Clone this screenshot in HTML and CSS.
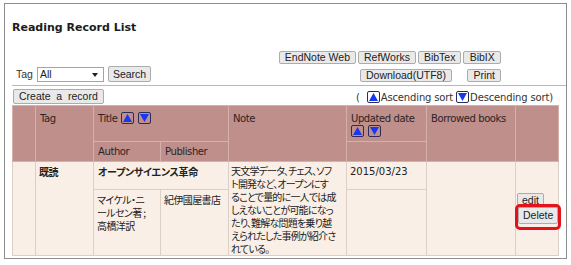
FILE: index.html
```html
<!DOCTYPE html>
<html lang="ja">
<head>
  <meta charset="UTF-8">
  <title>Reading Record List</title>
  <link rel="stylesheet" href="styles.css">
</head>
<body>
  <div class="frame">
    <h1>Reading Record List</h1>

    <div class="toolbar">
      <form class="search">
        <span>Tag</span>
        <span class="select"><select><option>All</option></select></span>
        <button type="button" class="btn btn-search">Search</button>
      </form>
      <div class="export">
        <button class="btn">EndNote Web</button>
        <button class="btn">RefWorks</button>
        <button class="btn">BibTex</button>
        <button class="btn">BibIX</button>
        <button class="btn btn-download">Download(UTF8)</button>
        <button class="btn btn-print">Print</button>
      </div>
    </div>

    <div class="actions">
      <button class="btn btn-create">Create&nbsp; a&nbsp; record</button>
      <span class="legend">(<svg class="sort first" viewBox="0 0 13 12"><rect x="0.5" y="0.5" width="12" height="11" rx="1.5"/><polygon points="2,10 11,10 6.5,2"/></svg>Ascending sort <svg class="sort" viewBox="0 0 13 12"><rect x="0.5" y="0.5" width="12" height="11" rx="1.5"/><polygon points="2,2 11,2 6.5,10"/></svg>Descending sort)</span>
    </div>

    <table class="records">
      <colgroup>
        <col style="width:23px">
        <col style="width:58px">
        <col style="width:67px">
        <col style="width:68px">
        <col style="width:118px">
        <col style="width:80px">
        <col style="width:89px">
        <col style="width:43px">
      </colgroup>
      <thead>
        <tr class="head1">
          <th rowspan="2"></th>
          <th rowspan="2">Tag</th>
          <th colspan="2">Title<svg class="sort" viewBox="0 0 13 12"><rect x="0.5" y="0.5" width="12" height="11" rx="1.5"/><polygon points="2,10 11,10 6.5,2"/></svg><svg class="sort" viewBox="0 0 13 12"><rect x="0.5" y="0.5" width="12" height="11" rx="1.5"/><polygon points="2,2 11,2 6.5,10"/></svg></th>
          <th rowspan="2">Note</th>
          <th class="updated">Updated date<br><svg class="sort" viewBox="0 0 13 12"><rect x="0.5" y="0.5" width="12" height="11" rx="1.5"/><polygon points="2,10 11,10 6.5,2"/></svg><svg class="sort" viewBox="0 0 13 12"><rect x="0.5" y="0.5" width="12" height="11" rx="1.5"/><polygon points="2,2 11,2 6.5,10"/></svg></th>
          <th rowspan="2">Borrowed books</th>
          <th rowspan="2"></th>
        </tr>
        <tr class="head2">
          <th>Author</th>
          <th>Publisher</th>
          <th></th>
        </tr>
      </thead>
      <tbody>
        <tr class="row1">
          <td rowspan="2"></td>
          <td rowspan="2" class="tag">既読</td>
          <td colspan="2" class="title">オープンサイエンス革命</td>
          <td rowspan="2" class="note">天文学データ、チェス、ソフ<br>ト開発など、オープンにす<br>ることで量的に一人では成<br>しえないことが可能になっ<br>たり、難解な問題を乗り越<br>えられたした事例が紹介さ<br>れている。</td>
          <td class="date">2015/03/23</td>
          <td rowspan="2"></td>
          <td rowspan="2" class="ops">
            <button class="btn btn-edit">edit</button>
            <span class="mark"><button class="btn btn-delete">Delete</button></span>
          </td>
        </tr>
        <tr class="row2">
          <td>マイケル・ニ<br>ールセン著 ;<br>高橋洋訳</td>
          <td>紀伊國屋書店</td>
          <td></td>
        </tr>
      </tbody>
    </table>
  </div>
</body>
</html>
```

FILE: styles.css
```css
:root {
  --head: #be8f8b;
  --head-line: #d5b1ad;
  --body: #f9efe6;
  --body-line: #dad0c8;
  --btn-bg: #e9e9e9;
  --btn-line: #acacac;
}
* { box-sizing: border-box; }
body {
  margin: 0;
  background: #fff;
  font-family: "DejaVu Sans", Verdana, sans-serif;
  color: #222;
}
.frame {
  margin: 3px 0 0 4px;
  width: 563px;
  height: 256px;
  border: 1px solid #8c8c8c;
  overflow: hidden;
}
h1 {
  margin: 17px 0 0 7px;
  font-size: 11px;
  line-height: 14px;
  font-weight: bold;
  color: #1c1c1c;
}
.toolbar {
  display: flex;
  justify-content: space-between;
  align-items: flex-end;
  margin: 16px 0 0 7px;
  padding: 0 65px 3px 4px;
  border-bottom: 1px solid #b8b8b8;
}
.search {
  display: flex;
  align-items: center;
  gap: 4px;
  margin: 0;
  font-family: "Liberation Sans", Arial, sans-serif;
  font-size: 10.5px;
  color: #333;
}
.select { position: relative; display: inline-block; }
.select select {
  appearance: none;
  -webkit-appearance: none;
  width: 67px;
  height: 15px;
  padding: 0 0 0 2px;
  border: 1px solid #a4a4a4;
  border-radius: 0;
  background: #fff;
  font-family: "Liberation Sans", Arial, sans-serif;
  font-size: 10.5px;
  line-height: 13px;
  color: #222;
}
.select::after {
  content: "";
  position: absolute;
  right: 6px;
  top: 6px;
  border-left: 3px solid transparent;
  border-right: 3px solid transparent;
  border-top: 4px solid #222;
}
.btn {
  font-family: "Liberation Sans", Arial, sans-serif;
  font-size: 10.5px;
  line-height: 11px;
  height: 13px;
  padding: 0 4px;
  color: #222;
  background: var(--btn-bg);
  border: 1px solid var(--btn-line);
  border-radius: 2px;
  white-space: nowrap;
}
.btn-search { height: 16px; }
.export {
  display: grid;
  grid-template-columns: repeat(4, auto);
  column-gap: 2px;
  row-gap: 5px;
}
.export .btn { padding: 0 5px; }
.btn-download { grid-column: 2 / 4; justify-self: start; margin-left: 2px; }
.btn-print { grid-column: 4; justify-self: start; margin-left: 4px; }

.actions {
  display: flex;
  justify-content: space-between;
  align-items: center;
  width: 546px;
  margin: 3px 0 1px 7px;
}
.btn-create { height: 15px; padding: 0 5px; margin-left: 1px; }
.legend {
  margin-right: 5px;
  font-size: 10px;
  letter-spacing: -0.15px;
  color: #333;
  white-space: nowrap;
}
.sort {
  width: 13px;
  height: 12px;
  vertical-align: -2px;
}
.sort rect { fill: none; stroke: #2c2c5c; stroke-width: 1; }
.sort polygon { fill: #1737f2; }
.legend .sort { margin-right: 1px; }
.legend .sort rect { fill: #fff; }
.legend .sort.first { margin-left: 7px; }

.records {
  margin-left: 7px;
  width: 546px;
  table-layout: fixed;
  border-collapse: collapse;
  border-bottom: 1px solid #a9a9a9;
}
.records th {
  background: var(--head);
  border: 1px solid var(--head-line);
  padding: 6px 4px 3px;
  font-size: 10px;
  letter-spacing: -0.4px;
  line-height: 13px;
  font-weight: normal;
  text-align: left;
  vertical-align: top;
  white-space: nowrap;
  color: #2b2424;
}
.records th .sort { vertical-align: -2px; margin-left: 4px; }
.records th.updated .sort { vertical-align: top; margin: 0 4px 0 0; }
.records .head2 th { padding: 3px 4px 3px; }
.records td {
  background: var(--body);
  border: 1px solid var(--body-line);
  padding: 3px 3px;
  font-family: "Noto Sans CJK JP", sans-serif;
  font-feature-settings: "palt";
  font-size: 10px;
  letter-spacing: -0.6px;
  line-height: 13px;
  vertical-align: top;
  color: #222;
  white-space: nowrap;
}
.records tr.row1 { height: 28px; }
.records tr.row2 { height: 65px; }
.records td.tag,
.records td.title { font-weight: bold; }
.records td.title { padding-left: 4px; letter-spacing: -0.3px; }
.records td.note { padding: 2px 2px 0; line-height: 13px; letter-spacing: -0.8px; overflow: hidden; }
.records td.date { font-family: "DejaVu Sans", Verdana, sans-serif; font-size: 10px; letter-spacing: 0; }
.records td.ops {
  vertical-align: middle;
  padding: 0 1px;
  overflow: visible;
  letter-spacing: 0;
}
.btn-edit {
  display: block;
  height: 13px;
  padding: 1px 4px 0;
  overflow: hidden;
}
.mark {
  position: relative;
  display: inline-block;
  margin: 1px 0 0 1px;
}
.mark::after {
  content: "";
  position: absolute;
  top: -3px;
  left: -3px;
  right: -3px;
  bottom: -6px;
  border: 3px solid #e3121b;
  border-radius: 5px;
}
.btn-delete { display: block; height: 17px; padding: 0 4px; }
```
